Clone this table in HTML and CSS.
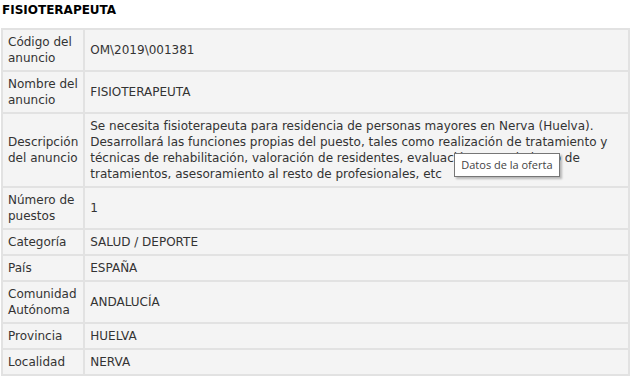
FILE: index.html
```html
<!DOCTYPE html>
<html lang="es">
<head>
  <meta charset="UTF-8">
  <title>Datos de la oferta</title>
  <link rel="stylesheet" href="styles.css">
</head>
<body>

<div class="oferta">
  <h3 class="oferta-titulo">FISIOTERAPEUTA</h3>

  <!-- Datos de la oferta -->
  <table class="datos">
    <tr>
      <th>Código del anuncio</th>
      <td>OM\2019\001381</td>
    </tr>
    <tr>
      <th>Nombre del anuncio</th>
      <td>FISIOTERAPEUTA</td>
    </tr>
    <tr>
      <th>Descripción del anuncio</th>
      <td class="desc">Se necesita fisioterapeuta para residencia de personas mayores en Nerva (Huelva). Desarrollará las funciones propias del puesto, tales como realización de tratamiento y técnicas de rehabilitación, valoración de residentes, evaluación y seguimiento de tratamientos, asesoramiento al resto de profesionales, etc
        <span class="tooltip">Datos de la oferta</span>
      </td>
    </tr>
    <tr>
      <th>Número de puestos</th>
      <td>1</td>
    </tr>
    <tr>
      <th>Categoría</th>
      <td>SALUD / DEPORTE</td>
    </tr>
    <tr>
      <th>País</th>
      <td>ESPAÑA</td>
    </tr>
    <tr>
      <th>Comunidad Autónoma</th>
      <td>ANDALUCÍA</td>
    </tr>
    <tr>
      <th>Provincia</th>
      <td>HUELVA</td>
    </tr>
    <tr>
      <th>Localidad</th>
      <td>NERVA</td>
    </tr>
  </table>
</div>

</body>
</html>
```

FILE: styles.css
```css
body { margin: 0; background: #fff; font-family: "DejaVu Sans", Verdana, sans-serif; font-size: 12px; color: #333; }
.oferta { padding: 0 1px; }
.oferta-titulo { margin: 0; padding: 3px 1px 0; height: 25px; font-size: 12px; font-weight: bold; color: #000; }
.datos { width: 629px; border-collapse: separate; border-spacing: 2px; background: #e2e2e2; }
.datos th, .datos td { background: #f4f4f4; padding: 4px 5px; line-height: 16px; text-align: left; vertical-align: middle; }
.datos th { width: 70px; font-weight: normal; }
.datos td.desc { position: relative; }
.tooltip { position: absolute; left: 369px; top: 39px; padding: 4px 6px; background: #fff; border: 1px solid #767676; box-shadow: 2px 2px 2px rgba(0,0,0,0.25); font-family: "Open Sans", sans-serif; font-size: 11px; line-height: 14px; color: #444; white-space: nowrap; }
```
